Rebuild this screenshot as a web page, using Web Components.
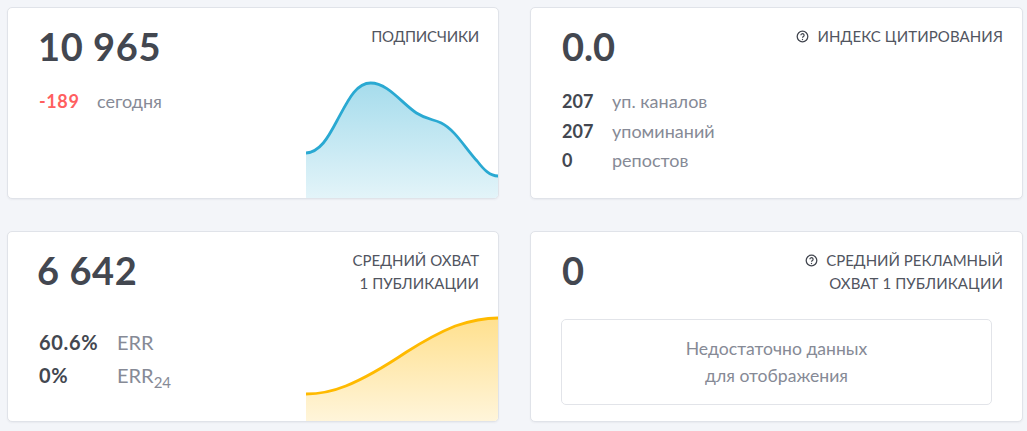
<!DOCTYPE html>
<html>
<head>
<meta charset="utf-8">
<style>
  html, body { margin: 0; height: 100%; overflow: hidden; }
  body {
    background: #f3f5f9;
    font-family: 'Lato', 'Noto Sans', sans-serif;
    padding: 7px 4px 0 7px;
    box-sizing: border-box;
  }
  .grid {
    display: grid;
    grid-template-columns: 492px 493px;
    grid-template-rows: 192px 191px;
    column-gap: 31px;
    row-gap: 32px;
  }
</style>
</head>
<body>

<template id="stat-card">
  <style>
    :host {
      display: flex;
      box-sizing: border-box;
      background: #fff;
      border: 1px solid #e0e3e9;
      border-radius: 5px;
      box-shadow: 0 1px 2px rgba(60, 70, 90, 0.06);
      overflow: hidden;
      color: #434750;
    }
    .left {
      flex: 1;
      min-width: 0;
      display: flex;
      flex-direction: column;
      padding: 0 0 0 31px;
    }
    .value {
      font-size: 38px;
      font-weight: 700;
      line-height: 46px;
      margin-top: 15px;
      letter-spacing: 0.6px;
    }
    .right {
      display: flex;
      flex-direction: column;
      align-items: flex-end;
    }
    .title {
      font-size: 15px;
      line-height: 23px;
      color: #51555f;
      text-align: right;
      padding: 17px 19px 0 0;
    }
    ::slotted([slot=chart]) { margin-top: auto; }
  </style>
  <div class="left">
    <div class="value"><slot name="value"></slot></div>
    <slot></slot>
  </div>
  <div class="right">
    <div class="title"><slot name="title"></slot></div>
    <slot name="chart"></slot>
  </div>
</template>

<template id="stat-row">
  <style>
    :host {
      display: flex;
      font-size: var(--row-size, 18px);
      line-height: 24px;
      color: #868a96;
    }
    .num {
      font-weight: 700;
      color: var(--num-color, #434750);
      width: var(--num-width, 49px);
      flex: none;
      letter-spacing: var(--num-spacing, 0);
    }
  </style>
  <span class="num"><slot name="num"></slot></span>
  <span><slot></slot></span>
</template>

<template id="help-icon">
  <style>
    :host { display: inline-block; width: 13px; height: 13px; margin-right: 8px; vertical-align: -1px; }
    svg { display: block; }
  </style>
  <svg width="13" height="13" viewBox="0 0 13 13" fill="none" stroke="#434750">
    <circle cx="6.5" cy="6.5" r="5.3" stroke-width="1.3"/>
    <path d="M4.9 5.3a1.6 1.6 0 1 1 2.5 1.3c-.6.4-.9.6-.9 1.2" stroke-width="1.2"/>
    <circle cx="6.5" cy="9.5" r=".7" fill="#434750" stroke="none"/>
  </svg>
</template>

<template id="area-chart">
  <style>
    :host { display: block; width: 192px; line-height: 0; }
    svg { display: block; }
  </style>
  <svg width="192" xmlns="http://www.w3.org/2000/svg" preserveAspectRatio="none">
    <defs>
      <linearGradient y1="0" y2="1" x1="0" x2="0">
        <stop class="a" offset="0"/>
        <stop class="b" offset="1"/>
      </linearGradient>
    </defs>
    <path class="fill" stroke="none"/>
    <path class="line" fill="none" stroke-width="2.8"/>
  </svg>
</template>

<template id="no-data">
  <style>
    :host {
      display: flex;
      align-items: center;
      justify-content: center;
      box-sizing: border-box;
      width: 431px;
      height: 86px;
      margin: 26px 0 0 -1px;
      border: 1px solid #e2e4e9;
      border-radius: 5px;
      text-align: center;
      font-size: 17.6px;
      line-height: 27px;
      color: #868a96;
    }
  </style>
  <div><slot></slot></div>
</template>

<div class="grid">
  <stat-card>
    <span slot="value" style="margin-left:-1px">10 965</span>
    <span slot="title" style="letter-spacing:-.2px">ПОДПИСЧИКИ</span>
    <stat-row style="--num-color:#ff5f5f;--num-width:58px;--num-spacing:.6px;margin-top:20px"><span slot="num">-189</span>сегодня</stat-row>
    <area-chart slot="chart" height="122" line="#2aa9d2" from="#a6dcec" to="#e3f4f9"
      d="M0 77C14 76 22 62 31 45C42 25 50 7 65 7C82 7 96 27 111 37C122 44 128 43 136 47C150 54 160 72 172 85C179 94 185 100 193 100"></area-chart>
  </stat-card>

  <stat-card>
    <span slot="value" style="letter-spacing:0">0.0</span>
    <span slot="title" style="letter-spacing:.1px"><help-icon></help-icon>ИНДЕКС ЦИТИРОВАНИЯ</span>
    <stat-row style="--num-width:50px;margin-top:20px"><span slot="num">207</span>уп. каналов</stat-row>
    <stat-row style="--num-width:50px;margin-top:6px"><span slot="num">207</span>упоминаний</stat-row>
    <stat-row style="--num-width:50px;margin-top:5px"><span slot="num">0</span>репостов</stat-row>
  </stat-card>

  <stat-card>
    <span slot="value" style="margin-left:-2px">6 642</span>
    <span slot="title">СРЕДНИЙ ОХВАТ<br>1 ПУБЛИКАЦИИ</span>
    <stat-row style="--row-size:20px;--num-width:78px;--num-spacing:.7px;margin-top:37px"><span slot="num">60.6%</span>ERR</stat-row>
    <stat-row style="--row-size:20px;--num-width:78px;--num-spacing:.7px;margin-top:9px"><span slot="num">0%</span><span>ERR<sub style="font-size:15px;line-height:0">24</sub></span></stat-row>
    <area-chart slot="chart" height="105" line="#ffba00" from="#ffe08e" to="#fff5da"
      d="M0 78C14 78 25 76 40 70C60 62 80 50 101 36C120 24 135 16 150 10C165 5 178 2 193 2"></area-chart>
  </stat-card>

  <stat-card>
    <span slot="value">0</span>
    <span slot="title"><help-icon></help-icon>СРЕДНИЙ РЕКЛАМНЫЙ<br><span style="letter-spacing:.1px">ОХВАТ 1 ПУБЛИКАЦИИ</span></span>
    <no-data>Недостаточно данных<br>для отображения</no-data>
  </stat-card>
</div>

<script>
  function shadowFrom(el, id) {
    const clone = document.importNode(document.querySelector('#' + id).content, true);
    el.attachShadow({ mode: 'open' }).appendChild(clone);
  }

  for (const name of ['stat-card', 'stat-row', 'help-icon', 'no-data']) {
    customElements.define(name, class extends HTMLElement {
      constructor() {
        super();
        shadowFrom(this, name);
      }
    });
  }

  let chartCount = 0;
  customElements.define('area-chart', class extends HTMLElement {
    constructor() {
      super();
      shadowFrom(this, 'area-chart');
    }

    connectedCallback() {
      const root = this.shadowRoot;
      const h = this.getAttribute('height');
      const d = this.getAttribute('d');
      const id = 'grad' + (++chartCount);
      const svg = root.querySelector('svg');
      svg.setAttribute('height', h);
      svg.setAttribute('viewBox', `0 0 193 ${h}`);
      root.querySelector('linearGradient').id = id;
      root.querySelector('.a').setAttribute('stop-color', this.getAttribute('from'));
      root.querySelector('.b').setAttribute('stop-color', this.getAttribute('to'));
      const fill = root.querySelector('.fill');
      fill.setAttribute('d', `${d}V${h}H0Z`);
      fill.setAttribute('fill', `url(#${id})`);
      const line = root.querySelector('.line');
      line.setAttribute('d', d);
      line.setAttribute('stroke', this.getAttribute('line'));
    }
  });
</script>
</body>
</html>
